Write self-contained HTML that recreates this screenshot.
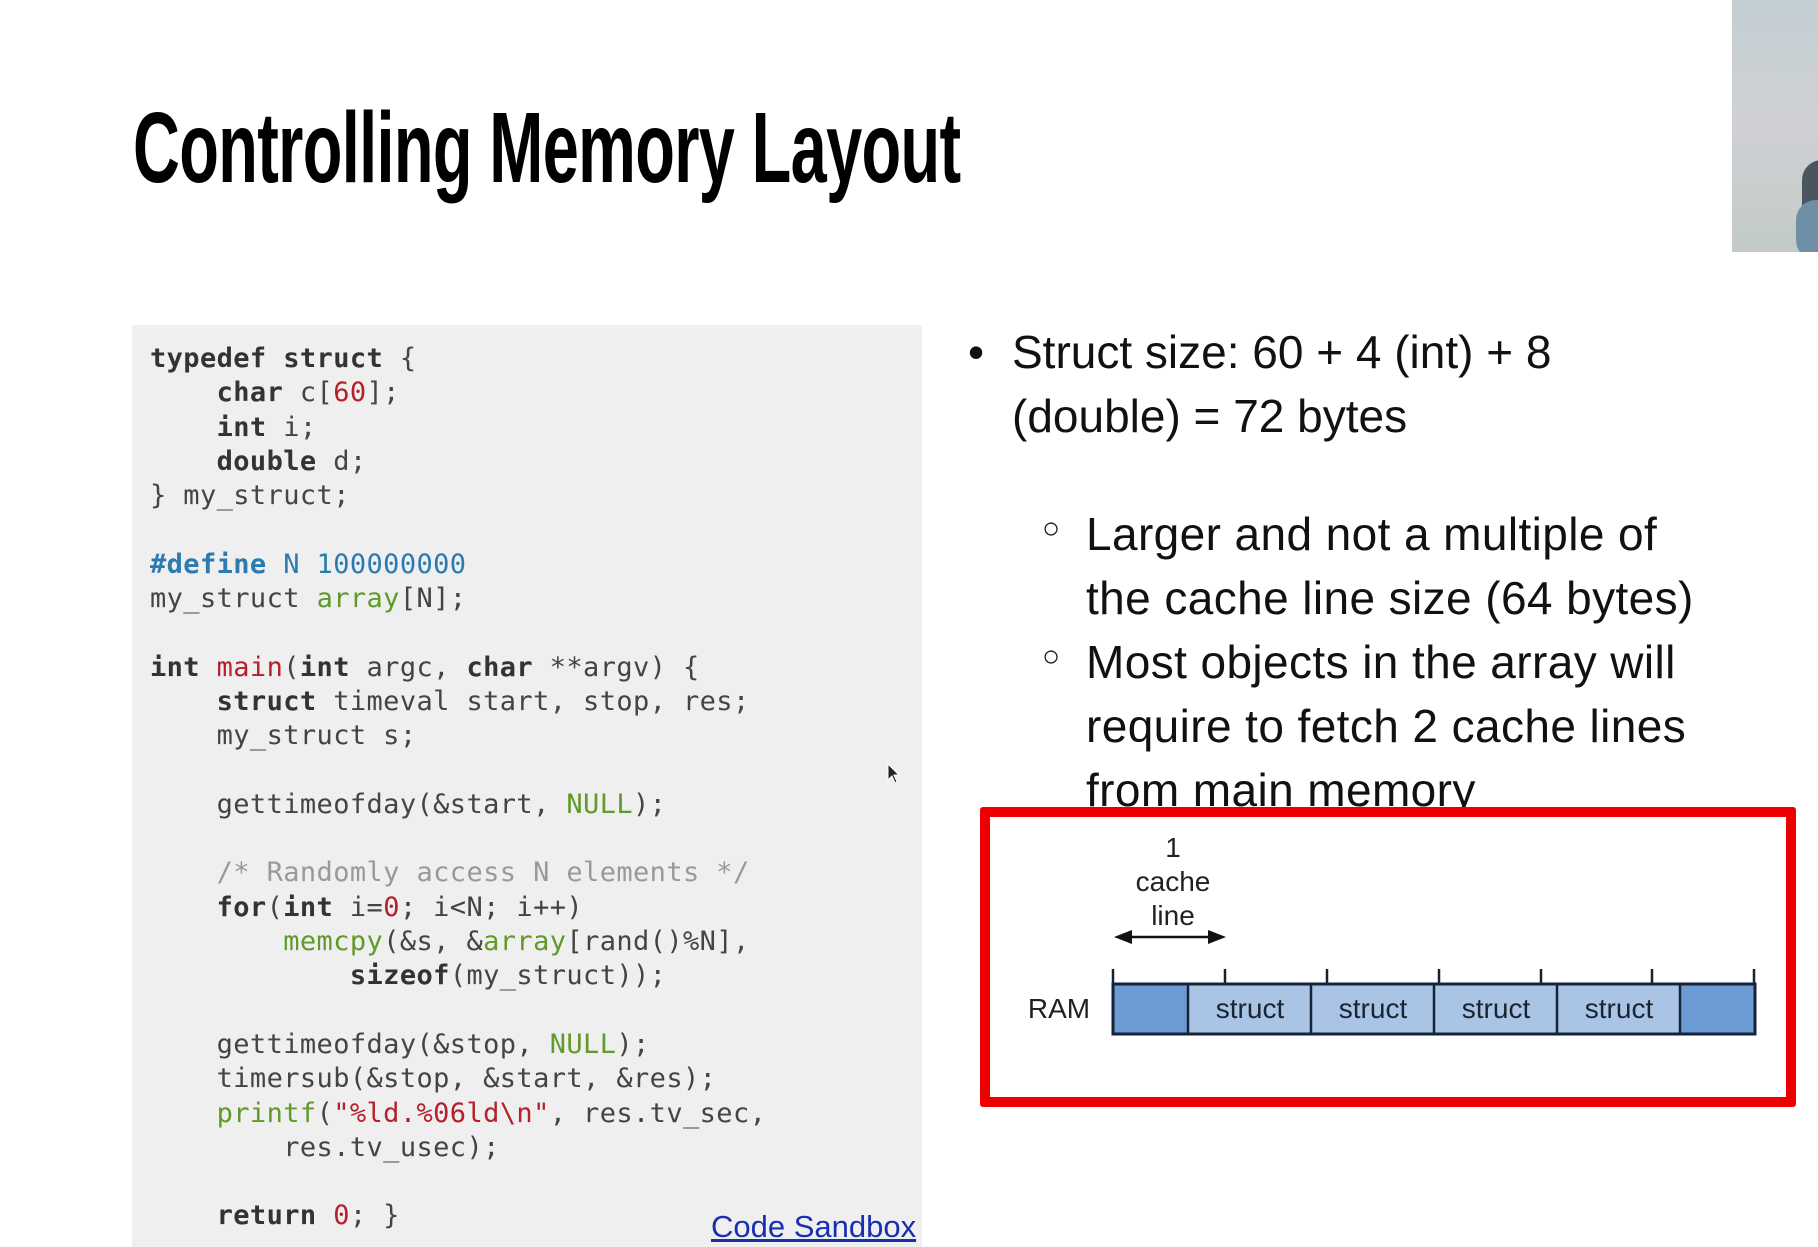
<!DOCTYPE html>
<html><head><meta charset="utf-8"><style>
*{margin:0;padding:0;box-sizing:border-box}
body{width:1818px;height:1247px;background:#fff;position:relative;overflow:hidden;font-family:"Liberation Sans",sans-serif;color:#111}
.abs{position:absolute;white-space:nowrap}
#title{left:133px;top:88px;font-family:"Liberation Sans Narrow","Liberation Sans",sans-serif;font-weight:bold;font-size:100px;line-height:120px;transform-origin:0 0;transform:scaleX(0.649);color:#000;letter-spacing:-1px}
#cam{left:1732px;top:0;width:86px;height:252px;background:linear-gradient(180deg,#c3cfd3 0%,#cfd0d4 50%,#c2cbc6 100%);overflow:hidden}
#code{left:132px;top:325px;width:790px;height:922px;background:#efefef}
pre{position:absolute;left:150px;top:342px;font-family:"DejaVu Sans Mono","Liberation Mono",monospace;font-size:27px;line-height:34.3px;color:#444;letter-spacing:0.4px}
b{color:#333}
.r{color:#b5202a}.g{color:#5f9a2a}.bl{color:#2b7bb0}.c{color:#999}
#link{left:711px;top:1209px;font-size:31px;color:#1a2fb0;text-decoration:underline}
.t{font-size:46px;color:#111}
.s{font-size:46px;color:#111;letter-spacing:0.4px}
#box{left:980px;top:807px;width:816px;height:300px;border:10px solid #ef0000;background:#fff;border-radius:3px}
</style></head><body>
<div id="title" class="abs">Controlling Memory Layout</div>
<div id="cam" class="abs"><div style="position:absolute;left:70px;top:160px;width:40px;height:110px;border-radius:20px;background:#4a5560"></div><div style="position:absolute;left:64px;top:200px;width:40px;height:60px;border-radius:20px;background:#6f8fa6"></div></div>
<div id="code" class="abs"></div>
<pre><b>typedef struct</b> {
    <b>char</b> c[<span class="r">60</span>];
    <b>int</b> i;
    <b>double</b> d;
} my_struct;

<span class="bl"><b style="color:#2b7bb0">#define</b> N 100000000</span>
my_struct <span class="g">array</span>[N];

<b>int</b> <span class="r">main</span>(<b>int</b> argc, <b>char</b> **argv) {
    <b>struct</b> timeval start, stop, res;
    my_struct s;

    gettimeofday(&amp;start, <span class="g">NULL</span>);

    <span class="c">/* Randomly access N elements */</span>
    <b>for</b>(<b>int</b> i=<span class="r">0</span>; i&lt;N; i++)
        <span class="g">memcpy</span>(&amp;s, &amp;<span class="g">array</span>[rand()%N],
            <b>sizeof</b>(my_struct));

    gettimeofday(&amp;stop, <span class="g">NULL</span>);
    timersub(&amp;stop, &amp;start, &amp;res);
    <span class="g">printf</span>(<span class="r">"%ld.%06ld\n"</span>, res.tv_sec,
        res.tv_usec);

    <b>return</b> <span class="r">0</span>; }</pre>
<div id="link" class="abs">Code Sandbox</div>
<svg class="abs" style="left:886px;top:762px" width="16" height="24"><path d="M2 2 L2 18 L6 14 L9 21 L11 20 L8 13 L13 13 Z" fill="#222" stroke="#fff" stroke-width="1"/></svg>

<div class="abs t" style="left:968px;top:325px">•</div>
<div class="abs t" style="left:1012px;top:325px">Struct size: 60 + 4 (int) + 8</div>
<div class="abs t" style="left:1012px;top:389px">(double) = 72 bytes</div>
<div class="abs s" style="left:1042px;top:512px;font-size:30px">○</div>
<div class="abs s" style="left:1086px;top:507px">Larger and not a multiple of</div>
<div class="abs s" style="left:1086px;top:571px">the cache line size (64 bytes)</div>
<div class="abs s" style="left:1042px;top:640px;font-size:30px">○</div>
<div class="abs s" style="left:1086px;top:635px">Most objects in the array will</div>
<div class="abs s" style="left:1086px;top:699px">require to fetch 2 cache lines</div>
<div class="abs s" style="left:1086px;top:763px">from main memory</div>

<div id="box" class="abs"></div>
<svg class="abs" style="left:990px;top:817px" width="796" height="280" viewBox="990 817 796 280">
<g font-family="Liberation Sans,sans-serif" font-size="28" fill="#222" text-anchor="middle">
<text x="1173" y="857">1</text><text x="1173" y="891">cache</text><text x="1173" y="925">line</text>
<text x="1059" y="1018">RAM</text>
</g>
<line x1="1128" y1="937" x2="1212" y2="937" stroke="#111" stroke-width="2.5"/>
<path d="M1114 937 L1132 930 L1132 944 Z M1226 937 L1208 930 L1208 944 Z" fill="#111"/>
<rect x="1113" y="984" width="642" height="50" fill="#a9c4e4"/>
<rect x="1113" y="984" width="75" height="50" fill="#6b9bd2"/>
<rect x="1680" y="984" width="75" height="50" fill="#6b9bd2"/>
<rect x="1113" y="984" width="642" height="50" fill="none" stroke="#15233a" stroke-width="3"/>
<g stroke="#15233a" stroke-width="2.5">
<line x1="1188" y1="984" x2="1188" y2="1034"/><line x1="1311" y1="984" x2="1311" y2="1034"/><line x1="1434" y1="984" x2="1434" y2="1034"/><line x1="1557" y1="984" x2="1557" y2="1034"/><line x1="1680" y1="984" x2="1680" y2="1034"/>
<line x1="1113" y1="969" x2="1113" y2="984"/><line x1="1225" y1="969" x2="1225" y2="984"/><line x1="1327" y1="969" x2="1327" y2="984"/><line x1="1439" y1="969" x2="1439" y2="984"/><line x1="1541" y1="969" x2="1541" y2="984"/><line x1="1652" y1="969" x2="1652" y2="984"/><line x1="1754" y1="969" x2="1754" y2="984"/>
</g>
<g font-family="Liberation Sans,sans-serif" font-size="28" fill="#1a2433" text-anchor="middle">
<text x="1250" y="1018">struct</text><text x="1373" y="1018">struct</text><text x="1496" y="1018">struct</text><text x="1619" y="1018">struct</text>
</g>
</svg>
</body></html>
